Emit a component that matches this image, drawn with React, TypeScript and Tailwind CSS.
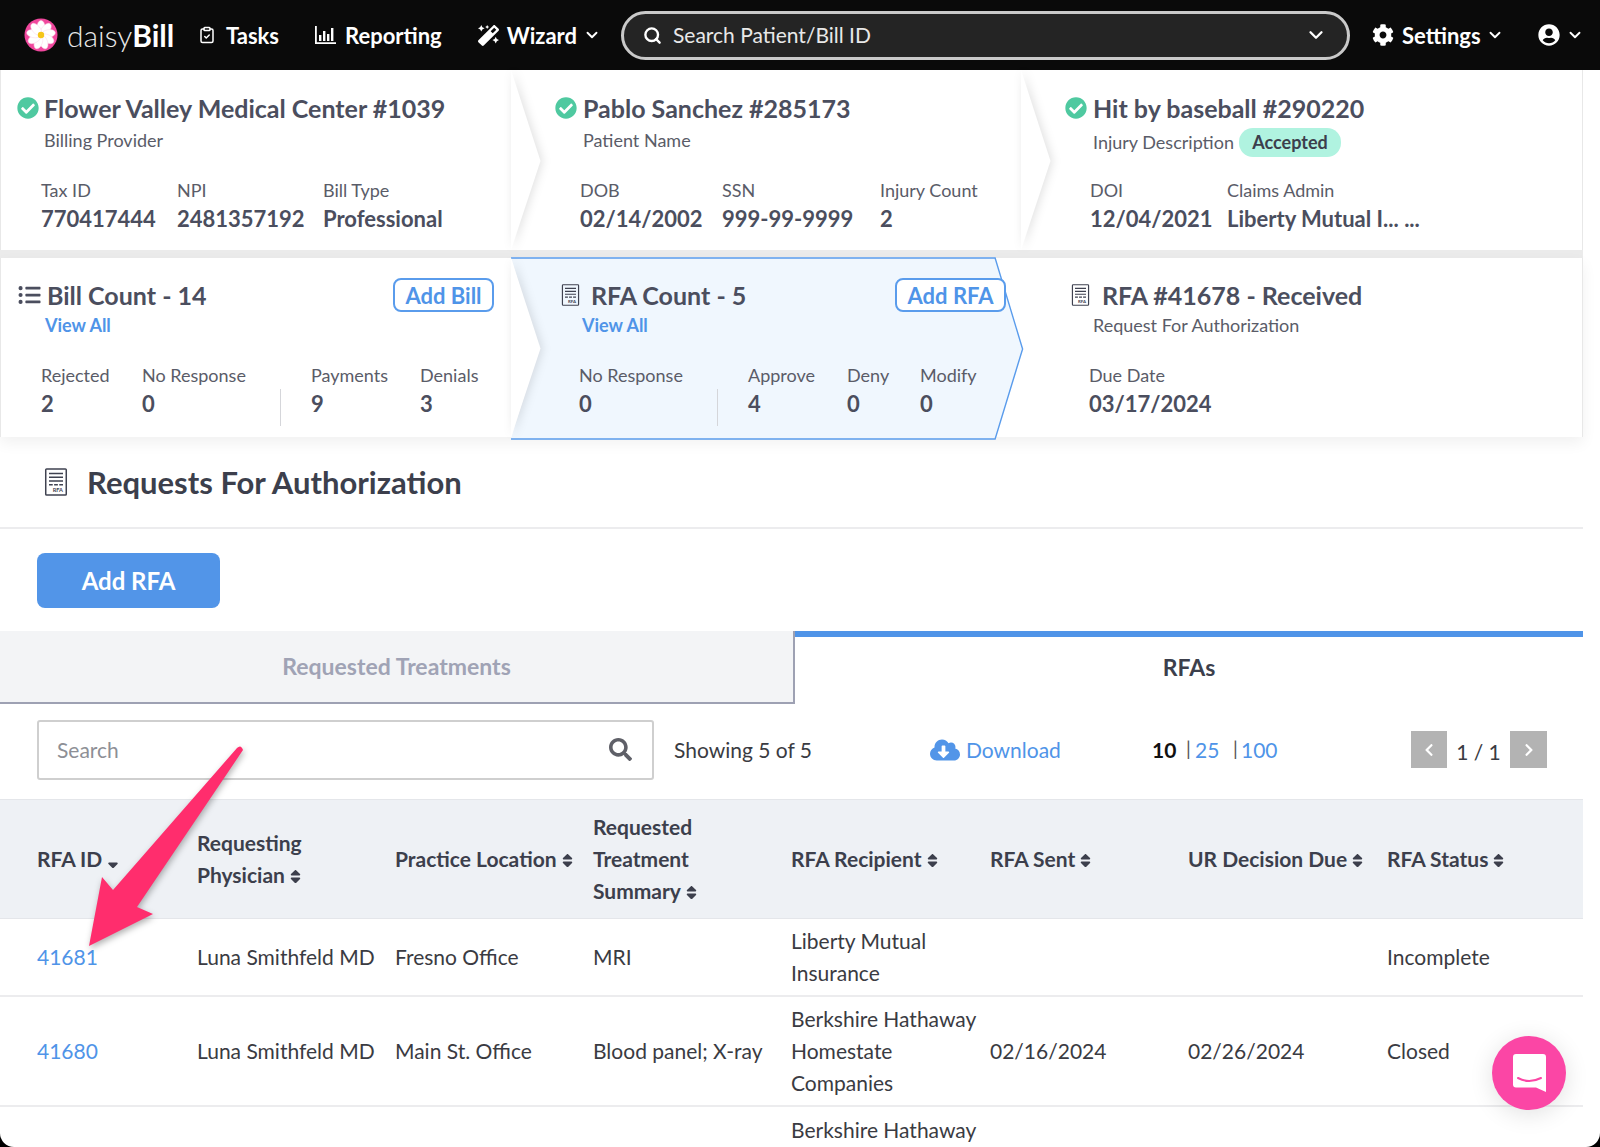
import React from "react";
import { FaCheckCircle, FaChevronDown, FaChevronLeft, FaChevronRight, FaCloudDownloadAlt, FaCog, FaListUl, FaMagic, FaSearch, FaSort, FaSortDown, FaUserCircle } from "react-icons/fa";
import { ClipboardCheck, ChevronDown, Search } from "lucide-react";

const RfaIcon = ({ className }: { className: string }) => (
  <svg viewBox="0 0 24 30" className={className} fill="none">
    <rect x="1" y="1" width="22" height="28" rx="1" stroke="#3f4250" strokeWidth="1.6" />
    <path d="M4.5 6h15M4.5 10h15M4.5 14h15" stroke="#3f4250" strokeWidth="1.6" />
    <path d="M4.5 18h4M10 18h4M15.5 18h4" stroke="#3f4250" strokeWidth="1.6" />
    <text x="19.5" y="26" fontSize="6" fontWeight="700" fill="#3f4250" textAnchor="end" fontFamily="Lato, sans-serif">RFA</text>
  </svg>
);

const Daisy = () => (
  <svg viewBox="0 0 34 34" className="h-[34px] w-[34px]">
    <circle cx="17" cy="17" r="16.5" fill="#f0479d" />
    {[0, 40, 80, 120, 160, 200, 240, 280, 320].map((a) => (
      <ellipse key={a} cx="17" cy="9.5" rx="4" ry="7" fill="#fff" stroke="#fbd5e8" strokeWidth="0.5" transform={`rotate(${a} 17 17)`} />
    ))}
    <circle cx="17" cy="17" r="3.2" fill="#f5c518" />
  </svg>
);

const Bars = () => (
  <svg viewBox="0 0 21 18" className="h-[18px] w-[21px]" fill="#fff">
    <path d="M0 0h1.8v16.2H21V18H0z" />
    <path d="M4 9h2.4v6H4zM8 5h2.4v10H8zM12 8h2.4v7H12zM16 2h2.4v13H16z" />
  </svg>
);

const Chevron = ({ active }: { active?: boolean }) => (
  <svg viewBox="0 0 31 180" preserveAspectRatio="none" className="absolute top-0 left-[-1px] h-full w-[31px] overflow-visible">
    <polygon points="0,0 29.5,91 0,180" fill={active ? "#f0f7fe" : "#fff"} className="drop-shadow-[2px_0_5px_rgba(0,0,0,0.12)]" />
  </svg>
);

const Metric = ({ label, value, className }: { label: string; value: string; className: string }) => (
  <div className={className}>
    <div className="h-[28px] text-[18px] leading-[28px] text-[#5a5c68]">{label}</div>
    <div className="h-[30px] text-[22px] font-bold leading-[30px] text-[#4b4e5e]">{value}</div>
  </div>
);

const Divider = ({ className }: { className: string }) => <div className={`h-[37px] w-px self-end bg-[#d5d6da] ${className}`} />;

const Title = ({ children, className }: { children: React.ReactNode; className?: string }) => (
  <div className={`text-[25px] font-bold leading-[32px] whitespace-nowrap text-[#4b4e5e] ${className ?? ""}`}>{children}</div>
);

const OutlineBtn = ({ children, className }: { children: React.ReactNode; className: string }) => (
  <div className={`flex h-[34px] items-center justify-center rounded-[8px] border-2 border-[#5a9cec] bg-white text-[22px] font-bold text-[#4f94e8] ${className}`}>{children}</div>
);

const Check = ({ className }: { className: string }) => <FaCheckCircle className={`h-[22px] w-[22px] shrink-0 text-[#4fc9a0] ${className}`} />;

const Head = ({ children, className }: { children: React.ReactNode; className?: string }) => (
  <div className={`flex items-center text-[21px] font-bold leading-[32px] text-[#3c3f4c] ${className ?? ""}`}><div>{children}</div></div>
);

const Sort = () => <FaSort className="ml-[5px] inline h-[17px] w-[11px] align-[-2px] text-[#3c3f4c]" />;

const Cell = ({ children, className }: { children?: React.ReactNode; className?: string }) => (
  <div className={`flex items-center text-[21px] leading-[32px] text-[#3a3b42] ${className ?? ""}`}><div>{children}</div></div>
);

const COLS = "grid grid-cols-[197px_198px_198px_198px_199px_198px_199px_196px]";

export default function App() {
  return (
    <div className="h-[1147px] w-full overflow-hidden bg-black font-['Lato','Liberation_Sans',sans-serif]">
      <div className="relative h-full w-full overflow-hidden rounded-b-[14px] bg-white">
        {/* Nav */}
        <div className="flex h-[70px] items-center bg-[#0a0a0a] text-white">
          <div className="ml-[24px]"><Daisy /></div>
          <div className="ml-[9px] flex w-[120px] items-baseline text-[30px] leading-none whitespace-nowrap">
            <span className="font-light text-[#e8e8e8]">daisy</span><span className="font-bold">Bill</span>
          </div>
          <ClipboardCheck className="ml-[11px] h-[20px] w-[18px]" strokeWidth={2} />
          <span className="ml-[10px] text-[22px] font-bold">Tasks</span>
          <div className="ml-[36px]"><Bars /></div>
          <span className="ml-[9px] text-[22px] font-bold">Reporting</span>
          <FaMagic className="ml-[36px] h-[21px] w-[21px]" />
          <span className="ml-[8px] text-[22px] font-bold">Wizard</span>
          <ChevronDown className="ml-[6px] h-[18px] w-[18px]" strokeWidth={2.5} />
          <div className="ml-[20px] flex h-[49px] w-[729px] items-center rounded-[25px] border-[3px] border-[#c9c9c9] bg-[#242424] pr-[20px] pl-[19px]">
            <Search className="h-[19px] w-[19px]" strokeWidth={3} />
            <span className="ml-[11px] flex-1 text-[21px] text-[#e8e8e8]">Search Patient/Bill ID</span>
            <ChevronDown className="h-[22px] w-[22px]" strokeWidth={2.5} />
          </div>
          <FaCog className="ml-[22px] h-[22px] w-[22px]" />
          <span className="ml-[8px] text-[22px] font-bold">Settings</span>
          <ChevronDown className="ml-[5px] h-[18px] w-[18px]" strokeWidth={2.5} />
          <FaUserCircle className="ml-[34px] h-[22px] w-[22px]" />
          <ChevronDown className="ml-[6px] h-[18px] w-[18px]" strokeWidth={2.5} />
        </div>

        {/* Strip 1 */}
        <div className="flex h-[180px] w-[1583px] border-x border-[#e8e8e8]">
          <div className="w-[511px] pt-[22px] pl-[16px]">
            <div className="flex items-center"><Check className="" /><Title className="ml-[5px]">Flower Valley Medical Center #1039</Title></div>
            <div className="mt-[3px] pl-[27px] text-[18px] leading-[26px] text-[#5a5c68]">Billing Provider</div>
            <div className="mt-[23px] flex pl-[24px]">
              <Metric label="Tax ID" value="770417444" className="w-[136px]" />
              <Metric label="NPI" value="2481357192" className="w-[146px]" />
              <Metric label="Bill Type" value="Professional" className="w-[160px]" />
            </div>
          </div>
          <div className="relative w-[510px] pt-[22px] pl-[43px]">
            <Chevron />
            <div className="flex items-center"><Check className="" /><Title className="ml-[6px]">Pablo Sanchez #285173</Title></div>
            <div className="mt-[3px] pl-[28px] text-[18px] leading-[26px] text-[#5a5c68]">Patient Name</div>
            <div className="mt-[23px] flex pl-[25px]">
              <Metric label="DOB" value="02/14/2002" className="w-[142px]" />
              <Metric label="SSN" value="999-99-9999" className="w-[158px]" />
              <Metric label="Injury Count" value="2" className="w-[130px]" />
            </div>
          </div>
          <div className="relative flex-1 pt-[22px] pl-[43px]">
            <Chevron />
            <div className="flex items-center"><Check className="" /><Title className="ml-[6px]">Hit by baseball #290220</Title></div>
            <div className="mt-[3px] flex items-center pl-[28px] text-[18px] leading-[30px] text-[#5a5c68]">
              <span className="w-[146px] whitespace-nowrap">Injury Description</span>
              <span className="flex h-[29px] w-[102px] items-center justify-center rounded-[14px] bg-[#b0f3e0] font-bold text-[#3c3f4c]">Accepted</span>
            </div>
            <div className="mt-[19px] flex pl-[25px]">
              <Metric label="DOI" value="12/04/2021" className="w-[137px]" />
              <Metric label="Claims Admin" value="Liberty Mutual I... ..." className="w-[240px]" />
            </div>
          </div>
        </div>
        <div className="h-[8px] w-[1583px] bg-[#ebebeb]" />

        {/* Strip 2 */}
        <div className="flex h-[179px] w-[1583px] border-x border-[#e8e8e8] shadow-[0_6px_14px_rgba(0,0,0,0.06)]">
          <div className="w-[511px] pt-[20px] pl-[16px]">
            <div className="flex h-[34px] items-center">
              <FaListUl className="h-[22px] w-[25px] text-[#4b4e5e]" />
              <Title className="ml-[5px]">Bill Count - 14</Title>
              <OutlineBtn className="ml-auto mr-[18px] w-[101px]">Add Bill</OutlineBtn>
            </div>
            <div className="pl-[28px] text-[18px] font-bold leading-[26px] text-[#4f94e8]">View All</div>
            <div className="mt-[23px] flex pl-[24px]">
              <Metric label="Rejected" value="2" className="w-[101px]" />
              <Metric label="No Response" value="0" className="w-[138px]" />
              <Divider className="mb-[-7px]" />
              <div className="flex pl-[30px]">
                <Metric label="Payments" value="9" className="w-[109px]" />
                <Metric label="Denials" value="3" className="w-[70px]" />
              </div>
            </div>
          </div>
          <div className="relative w-[510px] pt-[20px] pl-[49px]">
            <svg viewBox="0 0 570 179" preserveAspectRatio="none" className="absolute top-[-1px] left-[-1px] h-[181px] w-[540px] overflow-visible">
              <polygon points="0,0 510,0 539,91 510,180 0,180 29,91" transform="scale(1)" fill="#f0f7fe" stroke="none" />
              <path d="M0 1H511L540 91L511 180H0" fill="none" stroke="#5a9cec" strokeWidth="1.5" />
            </svg>
            <Chevron />
            <div className="relative flex h-[34px] items-center">
              <RfaIcon className="h-[22px] w-[19px]" />
              <Title className="ml-[11px]">RFA Count - 5</Title>
              <OutlineBtn className="ml-auto mr-[16px] w-[111px]">Add RFA</OutlineBtn>
            </div>
            <div className="relative pl-[21px] text-[18px] font-bold leading-[26px] text-[#4f94e8]">View All</div>
            <div className="relative mt-[23px] flex pl-[18px]">
              <Metric label="No Response" value="0" className="w-[138px]" />
              <Divider className="mb-[-7px]" />
              <div className="flex pl-[30px]">
                <Metric label="Approve" value="4" className="w-[99px]" />
                <Metric label="Deny" value="0" className="w-[73px]" />
                <Metric label="Modify" value="0" className="w-[70px]" />
              </div>
            </div>
          </div>
          <div className="relative flex-1 pt-[20px] pl-[49px]">
            <div className="relative flex h-[34px] items-center">
              <RfaIcon className="h-[22px] w-[19px]" />
              <Title className="ml-[12px]">RFA #41678 - Received</Title>
            </div>
            <div className="relative pl-[22px] text-[18px] leading-[26px] text-[#5a5c68]">Request For Authorization</div>
            <div className="relative mt-[23px] pl-[18px]">
              <Metric label="Due Date" value="03/17/2024" className="w-[200px]" />
            </div>
          </div>
        </div>

        {/* Page title */}
        <div className="flex h-[92px] w-[1583px] items-center border-b-2 border-[#ececee] pl-[44px]">
          <RfaIcon className="h-[28px] w-[24px]" />
          <h1 className="ml-[19px] text-[31px] font-bold text-[#3c3f4c]">Requests For Authorization</h1>
        </div>
        <div className="pt-[24px] pl-[37px]">
          <div className="flex h-[55px] w-[183px] items-center justify-center rounded-[8px] bg-[#5295e8] text-[24px] font-bold text-white">Add RFA</div>
        </div>

        {/* Tabs */}
        <div className="mt-[23px] flex h-[73px] w-[1583px]">
          <div className="flex w-[795px] items-center justify-center border-r-2 border-b-2 border-[#9ea1b3] bg-[#f3f4f6] text-[23px] font-bold text-[#a0a3b5]">Requested Treatments</div>
          <div className="flex flex-1 items-center justify-center border-t-[6px] border-[#4f94e8] pb-[6px] text-[23px] font-bold text-[#3c3f4c]">RFAs</div>
        </div>

        {/* Toolbar */}
        <div className="flex h-[95px] w-[1583px] items-center pb-[4px] pl-[37px]">
          <div className="flex h-[60px] w-[617px] items-center rounded-[3px] border-2 border-[#cfcfcf] pr-[20px] pl-[18px]">
            <span className="flex-1 text-[21px] text-[#8d8f96]">Search</span>
            <FaSearch className="h-[23px] w-[23px] text-[#5f6068]" />
          </div>
          <span className="ml-[20px] w-[256px] text-[21px] text-[#3a3b42]">Showing 5 of 5</span>
          <FaCloudDownloadAlt className="h-[30px] w-[30px] text-[#5295e8]" />
          <span className="ml-[6px] w-[186px] text-[21px] text-[#4f94e8]">Download</span>
          <span className="w-[34px] text-[21px] font-bold text-[#111]">10</span>
          <span className="w-[9px] text-[19px] text-[#555]">|</span>
          <span className="w-[38px] text-[21px] text-[#4f94e8]">25</span>
          <span className="w-[8px] text-[19px] text-[#555]">|</span>
          <span className="w-[170px] text-[21px] text-[#4f94e8]">100</span>
          <div className="flex h-[37px] w-[36px] items-center justify-center bg-[#b3b3b3] text-white"><FaChevronLeft className="h-[14px] w-[14px]" /></div>
          <span className="mt-[5px] w-[63px] text-center text-[21px] text-[#3a3b42]">1 / 1</span>
          <div className="flex h-[37px] w-[37px] items-center justify-center bg-[#b3b3b3] text-white"><FaChevronRight className="h-[14px] w-[14px]" /></div>
        </div>

        {/* Table */}
        <div className="w-[1583px]">
          <div className={`${COLS} h-[120px] border-y border-[#e4e6ea] bg-[#eef1f5]`}>
            <Head className="pl-[37px]">RFA ID<FaSortDown className="ml-[5px] inline h-[17px] w-[12px] align-[-3px]" /></Head>
            <Head>Requesting<br />Physician<Sort /></Head>
            <Head>Practice Location<Sort /></Head>
            <Head>Requested<br />Treatment<br />Summary<Sort /></Head>
            <Head>RFA Recipient<Sort /></Head>
            <Head>RFA Sent<Sort /></Head>
            <Head>UR Decision Due<Sort /></Head>
            <Head>RFA Status<Sort /></Head>
          </div>
          <div className={`${COLS} h-[78px] border-b-2 border-[#ececee]`}>
            <Cell className="pl-[37px] text-[#4f94e8]">41681</Cell>
            <Cell>Luna Smithfeld MD</Cell>
            <Cell>Fresno Office</Cell>
            <Cell>MRI</Cell>
            <Cell>Liberty Mutual<br />Insurance</Cell>
            <Cell />
            <Cell />
            <Cell>Incomplete</Cell>
          </div>
          <div className={`${COLS} h-[110px] border-b-2 border-[#ececee]`}>
            <Cell className="pl-[37px] text-[#4f94e8]">41680</Cell>
            <Cell>Luna Smithfeld MD</Cell>
            <Cell>Main St. Office</Cell>
            <Cell>Blood panel; X-ray</Cell>
            <Cell>Berkshire Hathaway<br />Homestate<br />Companies</Cell>
            <Cell>02/16/2024</Cell>
            <Cell>02/26/2024</Cell>
            <Cell>Closed</Cell>
          </div>
          <div className={`${COLS} h-[110px]`}>
            <Cell className="col-start-5">Berkshire Hathaway<br />Homestate<br />Companies</Cell>
          </div>
        </div>

        {/* Annotation arrow */}
        <svg viewBox="0 0 1600 1147" className="pointer-events-none absolute inset-0 h-[1147px] w-[1600px] drop-shadow-[1px_3px_3px_rgba(0,0,0,0.3)]">
          <path d="M237 748Q241 744 243 750L137 907L153 914L89 946L102 877L113 890Z" fill="#ff2d6d" />
        </svg>

        {/* Chat launcher */}
        <div className="absolute top-[1036px] left-[1492px] flex h-[74px] w-[74px] items-center justify-center rounded-full bg-[#fb46a5] shadow-[0_4px_24px_rgba(0,0,0,0.12)]">
          <svg viewBox="0 0 33 38" className="h-[38px] w-[33px]">
            <path d="M3 0H30a3 3 0 0 1 3 3V38L23 33.5H3a3 3 0 0 1-3-3V3a3 3 0 0 1 3-3Z" fill="#fff" />
            <path d="M5 24Q16 30 28 24" stroke="#fb46a5" strokeWidth="2" fill="none" strokeLinecap="round" />
          </svg>
        </div>
      </div>
    </div>
  );
}
